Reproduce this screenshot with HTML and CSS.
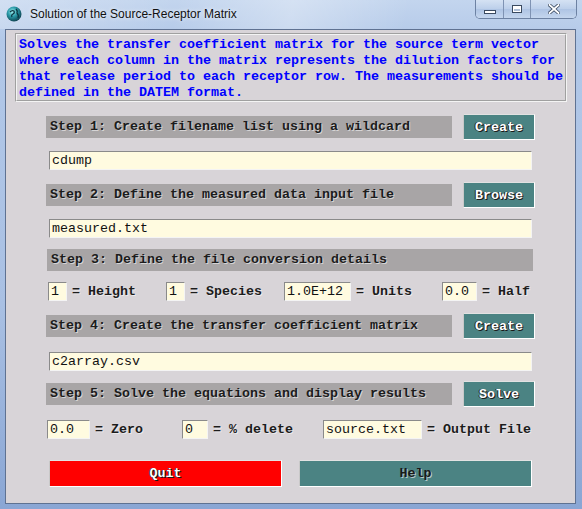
FILE: index.html
```html
<!DOCTYPE html>
<html>
<head>
<meta charset="utf-8">
<link rel="stylesheet" href="styles.css">
</head>
<body>
<div class="window">
  <div class="titlebar">
    <svg class="app-icon" width="16" height="16" viewBox="0 0 16 16">
      <defs>
        <radialGradient id="g" cx="0.4" cy="0.35" r="0.7">
          <stop offset="0" stop-color="#9ff0f0"/>
          <stop offset="0.45" stop-color="#2a9aa8"/>
          <stop offset="1" stop-color="#0c3a48"/>
        </radialGradient>
      </defs>
      <circle cx="8" cy="8" r="7.5" fill="url(#g)"/>
      <path d="M4 6 Q6 4 8 5 Q9 7 7 8 Q5 9 6 11 M10 3 Q12 5 11 7 Q13 9 12 12" fill="none" stroke="#0b3440" stroke-width="1.2"/>
    </svg>
    <span class="title">Solution of the Source-Receptor Matrix</span>
    <div class="controls">
      <div class="ctl ctl-min"><span class="g-min"></span></div>
      <div class="ctl ctl-max"><span class="g-max"></span></div>
      <div class="ctl ctl-close">
        <svg width="12" height="10" viewBox="0 0 12 10">
          <path d="M1.5 1 L10.5 9 M10.5 1 L1.5 9" stroke="#3a4a60" stroke-width="3.4" stroke-linecap="square"/>
          <path d="M1.5 1 L10.5 9 M10.5 1 L1.5 9" stroke="#ffffff" stroke-width="1.8" stroke-linecap="square"/>
        </svg>
      </div>
    </div>
  </div>
  <div class="client">
    <div class="desc">Solves the transfer coefficient matrix for the source term vector
where each column in the matrix represents the dilution factors for
that release period to each receptor row. The measurements should be
defined in the DATEM format.</div>
    <div class="content">
      <div class="step-row">
        <div class="step-label">Step 1: Create filename list using a wildcard</div>
        <div class="btn teal">Create</div>
      </div>
      <div class="entry wide">cdump</div>
      <div class="step-row plus1">
        <div class="step-label">Step 2: Define the measured data input file</div>
        <div class="btn teal">Browse</div>
      </div>
      <div class="entry wide">measured.txt</div>
      <div class="step-label full">Step 3: Define the file conversion details</div>
      <div class="opts opts3">
        <div class="opt"><span class="entry e19">1</span><span class="opt-label">= Height</span></div>
        <div class="opt"><span class="entry e19">1</span><span class="opt-label">= Species</span></div>
        <div class="opt"><span class="entry e67">1.0E+12</span><span class="opt-label">= Units</span></div>
        <div class="opt"><span class="entry e35">0.0</span><span class="opt-label">= Half</span></div>
      </div>
      <div class="step-row plus1">
        <div class="step-label">Step 4: Create the transfer coefficient matrix</div>
        <div class="btn teal">Create</div>
      </div>
      <div class="entry wide plus2">c2array.csv</div>
      <div class="step-row minus1">
        <div class="step-label">Step 5: Solve the equations and display results</div>
        <div class="btn teal">Solve</div>
      </div>
      <div class="opts opts5 plus2">
        <div class="opt"><span class="entry e43">0.0</span><span class="opt-label">= Zero</span></div>
        <div class="opt"><span class="entry e26">0</span><span class="opt-label">= % delete</span></div>
        <div class="opt"><span class="entry e99">source.txt</span><span class="opt-label">= Output File</span></div>
      </div>
      <div class="bottom-row">
        <div class="btn big red">Quit</div>
        <div class="btn big teal dark-text">Help</div>
      </div>
    </div>
  </div>
</div>
</body>
</html>
```
FILE: styles.css
```css
html, body {
  margin: 0;
  padding: 0;
}
body {
  width: 582px;
  height: 509px;
  overflow: hidden;
  background: #a9c0e2;
}
.window {
  width: 582px;
  height: 509px;
  display: flex;
  flex-direction: column;
  background: linear-gradient(180deg, #c3d5ee 0%, #b2c8e8 8%, #a9c0e3 60%, #8aa6d4 100%);
  box-sizing: border-box;
}
.titlebar {
  height: 29px;
  display: flex;
  align-items: flex-start;
  flex-shrink: 0;
  background: linear-gradient(100deg, rgba(255,255,255,0.25) 0%, rgba(255,255,255,0) 30%, rgba(255,255,255,0.3) 50%, rgba(255,255,255,0) 70%);
}
.app-icon {
  margin: 6px 0 0 6px;
  flex-shrink: 0;
}
.title {
  font-family: "Liberation Sans", Arial, sans-serif;
  font-size: 12px;
  color: #111;
  margin: 7px 0 0 8px;
  line-height: 14px;
  text-shadow: 0 0 4px rgba(255,255,255,0.9);
}
.controls {
  margin-left: auto;
  margin-right: 5px;
  display: flex;
  height: 18px;
  border: 1px solid #6d82a3;
  border-top: none;
  border-radius: 0 0 5px 5px;
  overflow: hidden;
  box-shadow: inset 0 0 0 1px rgba(255,255,255,0.55);
}
.ctl {
  display: flex;
  align-items: center;
  justify-content: center;
  background: linear-gradient(180deg, #d5e2f3 0%, #bccfea 50%, #aec4e4 51%, #c4d6ee 100%);
}
.ctl-min { width: 27px; border-right: 1px solid #7f93b3; }
.ctl-max { width: 26px; border-right: 1px solid #7f93b3; }
.ctl-close { width: 45px; }
.g-min {
  width: 10px;
  height: 2px;
  margin-top: 6px;
  background: #fff;
  border: 1px solid #3a4a60;
}
.g-max {
  width: 8px;
  height: 6px;
  border: 1px solid #3a4a60;
  box-shadow: inset 0 0 0 1px #fff, inset 0 2px 0 1px #fff;
  background: #aebfd8;
}

.client {
  flex: 1;
  margin: 0 6px 5px 5px;
  border: 1px solid #5f7292;
  background: #d8d4d8;
  display: flex;
  flex-direction: column;
  font-family: "Liberation Mono", "Courier New", monospace;
  font-size: 13.33px;
}
.desc {
  margin: 3px 8px 0 9px;
  height: 69px;
  box-sizing: border-box;
  border: 2px groove #f4f4f4;
  padding: 2px 0 0 2px;
  color: #0000ff;
  font-weight: bold;
  line-height: 16px;
  white-space: pre;
  overflow: hidden;
}
.content {
  margin: 12px 0 0 40px;
  width: 489px;
  display: flex;
  flex-direction: column;
  gap: 11px;
}
.plus1 { margin-top: 1px; }
.plus2 { margin-top: 2px; }
.minus1 { margin-top: -1px; }
.step-row {
  height: 26px;
  display: flex;
  align-items: center;
  gap: 11px;
}
.step-label {
  width: 406px;
  height: 22px;
  line-height: 22px;
  box-sizing: border-box;
  padding-left: 4px;
  background: #a8a5a6;
  color: #1c1c1c;
  font-weight: bold;
  text-shadow: 1px 1px 0 rgba(255,255,255,0.55);
  white-space: pre;
}
.step-label.full {
  width: auto;
  margin: 0 2px 0 1px;
}
.btn {
  box-sizing: border-box;
  display: flex;
  align-items: center;
  justify-content: center;
  font-weight: bold;
  color: #fff;
  text-shadow: 1px 1px 0 #1a1a1a, -1px 0 0 #2a2a2a;
  border: 1px solid;
  border-color: #e2e2e2 #fff #fff #c8c8c8;
}
.step-row .btn {
  width: 72px;
  height: 26px;
}
.teal {
  background: #4b8383;
}
.red {
  background: #ff0000;
}
.dark-text {
  color: #1a1a1a;
  text-shadow: 1px 1px 0 rgba(255,255,255,0.6);
}
.entry {
  box-sizing: border-box;
  background: #fffbe0;
  border: 1px solid;
  border-color: #8a8a8a #f4f4f4 #f4f4f4 #8a8a8a;
  color: #111;
  height: 19px;
  line-height: 17px;
  padding-left: 2px;
  white-space: pre;
  overflow: hidden;
}
.entry.wide {
  margin-left: 3px;
  margin-right: 3px;
}
.opts {
  height: 19px;
  display: grid;
  align-items: center;
}
.opts3 {
  margin-left: 2px;
  grid-template-columns: 118px 118px 158px auto;
}
.opts5 {
  margin-left: 1px;
  grid-template-columns: 135px 141px auto;
}
.opt {
  display: flex;
  align-items: center;
  gap: 5px;
}
.opt .entry {
  display: block;
}
.e19 { width: 19px; }
.e26 { width: 26px; }
.e35 { width: 35px; }
.e43 { width: 43px; }
.e67 { width: 67px; }
.e99 { width: 99px; }
.opt-label {
  color: #1c1c1c;
  font-weight: bold;
  text-shadow: 1px 1px 0 rgba(255,255,255,0.55);
  white-space: pre;
}
.bottom-row {
  margin: 10px 3px 0 3px;
  display: flex;
  gap: 17px;
}
.btn.big {
  flex: 1;
  height: 27px;
}
```
